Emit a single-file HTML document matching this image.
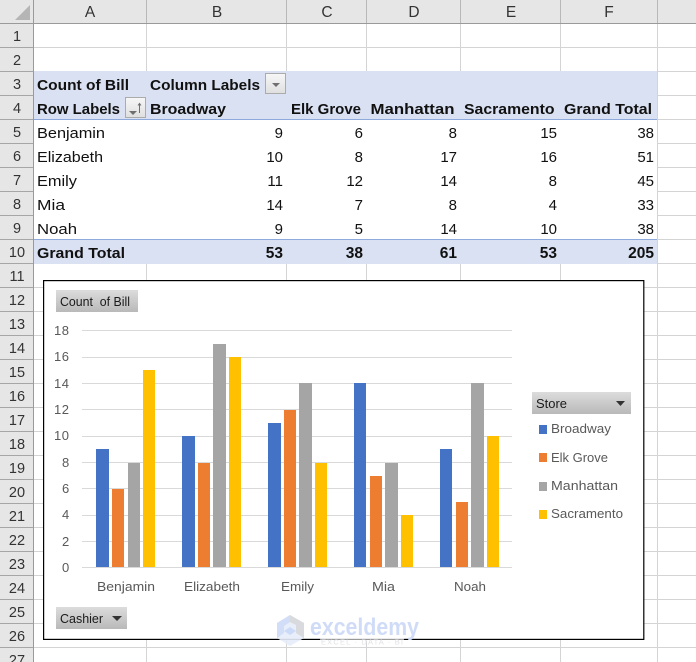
<!DOCTYPE html>
<html><head><meta charset="utf-8"><style>
html,body{margin:0;padding:0;background:#fff}
svg{display:block;position:absolute;left:0;top:0}
text{font-family:"Liberation Sans",sans-serif;white-space:pre}
.b{font-weight:bold;font-size:14.5px;fill:#111}
.n{font-size:14.5px;fill:#111}
.r{font-size:15px;fill:#111;text-anchor:end}
.rb{font-size:15.5px;fill:#111;text-anchor:end;font-weight:bold}
.ch{font-size:15.5px;fill:#333;text-anchor:middle}
.rh{font-size:14.5px;fill:#333;text-anchor:middle}
.ax{font-size:13px;fill:#595959}
.bt{font-size:12.5px;fill:#1a1a1a}
</style></head><body>
<svg width="696" height="662" viewBox="0 0 696 662" xmlns="http://www.w3.org/2000/svg">
<defs>
<linearGradient id="g" x1="0" y1="0" x2="0" y2="1"><stop offset="0" stop-color="#dcdcdc"/><stop offset="1" stop-color="#b9b9b9"/></linearGradient>
<linearGradient id="f" x1="0" y1="0" x2="0" y2="1"><stop offset="0" stop-color="#f7f7f7"/><stop offset="1" stop-color="#dfdfdf"/></linearGradient>
</defs>
<rect width="696" height="662" fill="#fff"/>
<!-- grid -->
<g fill="#d4d4d4">
<rect x="34" y="47" width="662" height="1"/><rect x="34" y="71" width="662" height="1"/>
<rect x="658" y="95" width="38" height="1"/><rect x="658" y="119" width="38" height="1"/><rect x="658" y="143" width="38" height="1"/><rect x="658" y="167" width="38" height="1"/><rect x="658" y="191" width="38" height="1"/><rect x="658" y="215" width="38" height="1"/><rect x="658" y="239" width="38" height="1"/><rect x="658" y="263" width="38" height="1"/>
<rect x="34" y="287" width="662" height="1"/><rect x="34" y="311" width="662" height="1"/><rect x="34" y="335" width="662" height="1"/><rect x="34" y="359" width="662" height="1"/><rect x="34" y="383" width="662" height="1"/><rect x="34" y="407" width="662" height="1"/><rect x="34" y="431" width="662" height="1"/><rect x="34" y="455" width="662" height="1"/><rect x="34" y="479" width="662" height="1"/><rect x="34" y="503" width="662" height="1"/><rect x="34" y="527" width="662" height="1"/><rect x="34" y="551" width="662" height="1"/><rect x="34" y="575" width="662" height="1"/><rect x="34" y="599" width="662" height="1"/><rect x="34" y="623" width="662" height="1"/><rect x="34" y="647" width="662" height="1"/>
<rect x="146" y="24" width="1" height="47"/><rect x="286" y="24" width="1" height="47"/><rect x="366" y="24" width="1" height="47"/><rect x="460" y="24" width="1" height="47"/><rect x="560" y="24" width="1" height="47"/><rect x="657" y="24" width="1" height="638"/>
<rect x="146" y="264" width="1" height="398"/><rect x="286" y="264" width="1" height="398"/><rect x="366" y="264" width="1" height="398"/><rect x="460" y="264" width="1" height="398"/><rect x="560" y="264" width="1" height="398"/>
</g>
<!-- headers -->
<rect x="0" y="0" width="696" height="23" fill="#e6e6e6"/>
<rect x="0" y="0" width="33" height="662" fill="#e6e6e6"/>
<polygon points="30,5 30,20 15,20" fill="#b5b5b5"/>
<g fill="#a6a6a6">
<rect x="33" y="0" width="1" height="662" fill="#9a9a9a"/>
<rect x="146" y="0" width="1" height="23" fill="#b8b8b8"/><rect x="286" y="0" width="1" height="23" fill="#b8b8b8"/><rect x="366" y="0" width="1" height="23" fill="#b8b8b8"/><rect x="460" y="0" width="1" height="23" fill="#b8b8b8"/><rect x="560" y="0" width="1" height="23" fill="#b8b8b8"/><rect x="657" y="0" width="1" height="23" fill="#b8b8b8"/>
<rect x="0" y="23" width="696" height="1" fill="#9a9a9a"/>
<rect x="0" y="47" width="33" height="1"/><rect x="0" y="71" width="33" height="1"/><rect x="0" y="95" width="33" height="1"/><rect x="0" y="119" width="33" height="1"/><rect x="0" y="143" width="33" height="1"/><rect x="0" y="167" width="33" height="1"/><rect x="0" y="191" width="33" height="1"/><rect x="0" y="215" width="33" height="1"/><rect x="0" y="239" width="33" height="1"/><rect x="0" y="263" width="33" height="1"/><rect x="0" y="287" width="33" height="1"/><rect x="0" y="311" width="33" height="1"/><rect x="0" y="335" width="33" height="1"/><rect x="0" y="359" width="33" height="1"/><rect x="0" y="383" width="33" height="1"/><rect x="0" y="407" width="33" height="1"/><rect x="0" y="431" width="33" height="1"/><rect x="0" y="455" width="33" height="1"/><rect x="0" y="479" width="33" height="1"/><rect x="0" y="503" width="33" height="1"/><rect x="0" y="527" width="33" height="1"/><rect x="0" y="551" width="33" height="1"/><rect x="0" y="575" width="33" height="1"/><rect x="0" y="599" width="33" height="1"/><rect x="0" y="623" width="33" height="1"/><rect x="0" y="647" width="33" height="1"/>
</g>
<text class="ch" x="90" y="17">A</text><text class="ch" x="217" y="17">B</text><text class="ch" x="327" y="17">C</text><text class="ch" x="414" y="17">D</text><text class="ch" x="511" y="17">E</text><text class="ch" x="609" y="17">F</text>
<text class="rh" x="17" y="41">1</text><text class="rh" x="17" y="65">2</text><text class="rh" x="17" y="89">3</text><text class="rh" x="17" y="113">4</text><text class="rh" x="17" y="137">5</text><text class="rh" x="17" y="161">6</text><text class="rh" x="17" y="185">7</text><text class="rh" x="17" y="209">8</text><text class="rh" x="17" y="233">9</text><text class="rh" x="17" y="257">10</text><text class="rh" x="17" y="281">11</text><text class="rh" x="17" y="305">12</text><text class="rh" x="17" y="329">13</text><text class="rh" x="17" y="353">14</text><text class="rh" x="17" y="377">15</text><text class="rh" x="17" y="401">16</text><text class="rh" x="17" y="425">17</text><text class="rh" x="17" y="449">18</text><text class="rh" x="17" y="473">19</text><text class="rh" x="17" y="497">20</text><text class="rh" x="17" y="521">21</text><text class="rh" x="17" y="545">22</text><text class="rh" x="17" y="569">23</text><text class="rh" x="17" y="593">24</text><text class="rh" x="17" y="617">25</text><text class="rh" x="17" y="641">26</text><text class="rh" x="17" y="665">27</text>
<!-- pivot -->
<rect x="34" y="71" width="623" height="48" fill="#d9e1f2"/>
<rect x="34" y="119" width="623" height="1" fill="#8ea9db"/>
<rect x="34" y="240" width="623" height="24" fill="#d9e1f2"/>
<rect x="34" y="239" width="623" height="1" fill="#8ea9db"/>
<text class="b" x="37" y="90" textLength="92" lengthAdjust="spacingAndGlyphs">Count of Bill</text>
<text class="b" x="150" y="90" textLength="110" lengthAdjust="spacingAndGlyphs">Column Labels</text>
<text class="b" x="37" y="114" textLength="83" lengthAdjust="spacingAndGlyphs">Row Labels</text>
<text class="b" x="150" y="114" textLength="76" lengthAdjust="spacingAndGlyphs">Broadway</text>
<text class="b" x="291" y="114" textLength="70" lengthAdjust="spacingAndGlyphs">Elk Grove</text>
<text class="b" x="370.5" y="114" textLength="84" lengthAdjust="spacingAndGlyphs">Manhattan</text>
<text class="b" x="464" y="114" textLength="90.5" lengthAdjust="spacingAndGlyphs">Sacramento</text>
<text class="b" x="564" y="114" textLength="88" lengthAdjust="spacingAndGlyphs">Grand Total</text>
<rect x="265.5" y="73.5" width="20" height="20" fill="url(#f)" stroke="#ababab"/>
<polygon points="272,83 280,83 276,87" fill="#6f6f6f"/>
<rect x="125.5" y="97.5" width="20" height="20" fill="url(#f)" stroke="#ababab"/>
<polygon points="129,111 137,111 133,115" fill="#6f6f6f"/>
<path d="M139.5 104V113M138 105.5L139.5 103.5L141 105.5" stroke="#6f6f6f" stroke-width="1" fill="none"/>
<text class="n" x="37" y="138" textLength="68" lengthAdjust="spacingAndGlyphs">Benjamin</text>
<text class="n" x="37" y="162" textLength="66" lengthAdjust="spacingAndGlyphs">Elizabeth</text>
<text class="n" x="37" y="186" textLength="40" lengthAdjust="spacingAndGlyphs">Emily</text>
<text class="n" x="37" y="210" textLength="28" lengthAdjust="spacingAndGlyphs">Mia</text>
<text class="n" x="37" y="234" textLength="40" lengthAdjust="spacingAndGlyphs">Noah</text>
<text class="b" x="37" y="258" textLength="88" lengthAdjust="spacingAndGlyphs">Grand Total</text>
<text class="r" x="283" y="138">9</text><text class="r" x="363" y="138">6</text><text class="r" x="457" y="138">8</text><text class="r" x="557" y="138">15</text><text class="r" x="654" y="138">38</text>
<text class="r" x="283" y="162">10</text><text class="r" x="363" y="162">8</text><text class="r" x="457" y="162">17</text><text class="r" x="557" y="162">16</text><text class="r" x="654" y="162">51</text>
<text class="r" x="283" y="186">11</text><text class="r" x="363" y="186">12</text><text class="r" x="457" y="186">14</text><text class="r" x="557" y="186">8</text><text class="r" x="654" y="186">45</text>
<text class="r" x="283" y="210">14</text><text class="r" x="363" y="210">7</text><text class="r" x="457" y="210">8</text><text class="r" x="557" y="210">4</text><text class="r" x="654" y="210">33</text>
<text class="r" x="283" y="234">9</text><text class="r" x="363" y="234">5</text><text class="r" x="457" y="234">14</text><text class="r" x="557" y="234">10</text><text class="r" x="654" y="234">38</text>
<text class="rb" x="283" y="258">53</text><text class="rb" x="363" y="258">38</text><text class="rb" x="457" y="258">61</text><text class="rb" x="557" y="258">53</text><text class="rb" x="654" y="258">205</text>
<!-- chart -->
<rect x="43.6" y="280.6" width="600.2" height="358.8" fill="#fff" stroke="#000" stroke-width="1.2"/>
<rect x="56" y="290" width="82" height="22" fill="url(#g)"/>
<text class="bt" x="60" y="306" textLength="70" lengthAdjust="spacingAndGlyphs">Count  of Bill</text>
<g fill="#d9d9d9">
<rect x="82" y="330" width="430" height="1"/><rect x="82" y="357" width="430" height="1"/><rect x="82" y="383" width="430" height="1"/><rect x="82" y="409" width="430" height="1"/><rect x="82" y="436" width="430" height="1"/><rect x="82" y="462" width="430" height="1"/><rect x="82" y="488" width="430" height="1"/><rect x="82" y="515" width="430" height="1"/><rect x="82" y="541" width="430" height="1"/><rect x="82" y="567" width="430" height="1"/>
</g>
<g class="ax">
<text class="ax" x="54" y="335" textLength="15">18</text><text class="ax" x="54" y="361" textLength="15">16</text><text class="ax" x="54" y="388" textLength="15">14</text><text class="ax" x="54" y="414" textLength="15">12</text><text class="ax" x="54" y="440" textLength="15">10</text><text class="ax" x="62" y="467">8</text><text class="ax" x="62" y="493">6</text><text class="ax" x="62" y="519">4</text><text class="ax" x="62" y="546">2</text><text class="ax" x="62" y="572">0</text>
</g>
<g fill="#4472c4">
<rect x="96" y="449" width="13" height="118"/><rect x="182" y="436" width="13" height="131"/><rect x="268" y="423" width="13" height="144"/><rect x="354" y="383" width="12" height="184"/><rect x="440" y="449" width="12" height="118"/>
</g>
<g fill="#ed7d31">
<rect x="112" y="489" width="12" height="78"/><rect x="198" y="463" width="12" height="104"/><rect x="284" y="410" width="12" height="157"/><rect x="370" y="476" width="12" height="91"/><rect x="456" y="502" width="12" height="65"/>
</g>
<g fill="#a5a5a5">
<rect x="128" y="463" width="12" height="104"/><rect x="213" y="344" width="13" height="223"/><rect x="299" y="383" width="13" height="184"/><rect x="385" y="463" width="13" height="104"/><rect x="471" y="383" width="13" height="184"/>
</g>
<g fill="#ffc000">
<rect x="143" y="370" width="12" height="197"/><rect x="229" y="357" width="12" height="210"/><rect x="315" y="463" width="12" height="104"/><rect x="401" y="515" width="12" height="52"/><rect x="487" y="436" width="12" height="131"/>
</g>
<text class="ax" x="97" y="591" textLength="58" lengthAdjust="spacingAndGlyphs">Benjamin</text>
<text class="ax" x="184" y="591" textLength="56" lengthAdjust="spacingAndGlyphs">Elizabeth</text>
<text class="ax" x="281" y="591" textLength="33" lengthAdjust="spacingAndGlyphs">Emily</text>
<text class="ax" x="372" y="591" textLength="23" lengthAdjust="spacingAndGlyphs">Mia</text>
<text class="ax" x="454" y="591" textLength="32" lengthAdjust="spacingAndGlyphs">Noah</text>
<!-- legend -->
<rect x="532" y="392" width="99" height="22" fill="url(#g)"/>
<text class="bt" x="536" y="408" textLength="31" lengthAdjust="spacingAndGlyphs">Store</text>
<polygon points="616,401 625,401 620.5,406" fill="#333"/>
<rect x="539" y="425" width="8" height="9" fill="#4472c4"/>
<rect x="539" y="453" width="8" height="9" fill="#ed7d31"/>
<rect x="539" y="482" width="8" height="9" fill="#a5a5a5"/>
<rect x="539" y="510" width="8" height="9" fill="#ffc000"/>
<text class="ax" x="551" y="433" textLength="60" lengthAdjust="spacingAndGlyphs">Broadway</text>
<text class="ax" x="551" y="462" textLength="57" lengthAdjust="spacingAndGlyphs">Elk Grove</text>
<text class="ax" x="551" y="490" textLength="67" lengthAdjust="spacingAndGlyphs">Manhattan</text>
<text class="ax" x="551" y="518" textLength="72" lengthAdjust="spacingAndGlyphs">Sacramento</text>
<rect x="56" y="607" width="71" height="22" fill="url(#g)"/>
<text class="bt" x="60" y="623" textLength="43" lengthAdjust="spacingAndGlyphs">Cashier</text>
<polygon points="112,616 122,616 117,621" fill="#333"/>
<!-- watermark -->
<rect x="320" y="638" width="84" height="3" fill="#fff" opacity=".6"/>
<polygon points="290,615 304,623 304,638 290,646 277,638 277,623" fill="#e6ecfa" opacity=".9"/>
<polygon points="290,615 304,623 304,638 296,633 296,625 290,622" fill="#d9dadd"/>
<polygon points="277,623 290,615 290,622 284,626 284,633 277,638" fill="#d2def8"/>
<polygon points="290,627 296,631 290,635 284,631" fill="#cbdaf7"/>
<text x="310" y="635" font-size="24.5" font-weight="bold" fill="#d0dcf7" textLength="109" lengthAdjust="spacingAndGlyphs">exceldemy</text>
<text x="321" y="644.5" font-size="7.5" fill="#e0e1e5" textLength="82" lengthAdjust="spacing">EXCEL · DATA · BI</text>
</svg>
</body></html>
